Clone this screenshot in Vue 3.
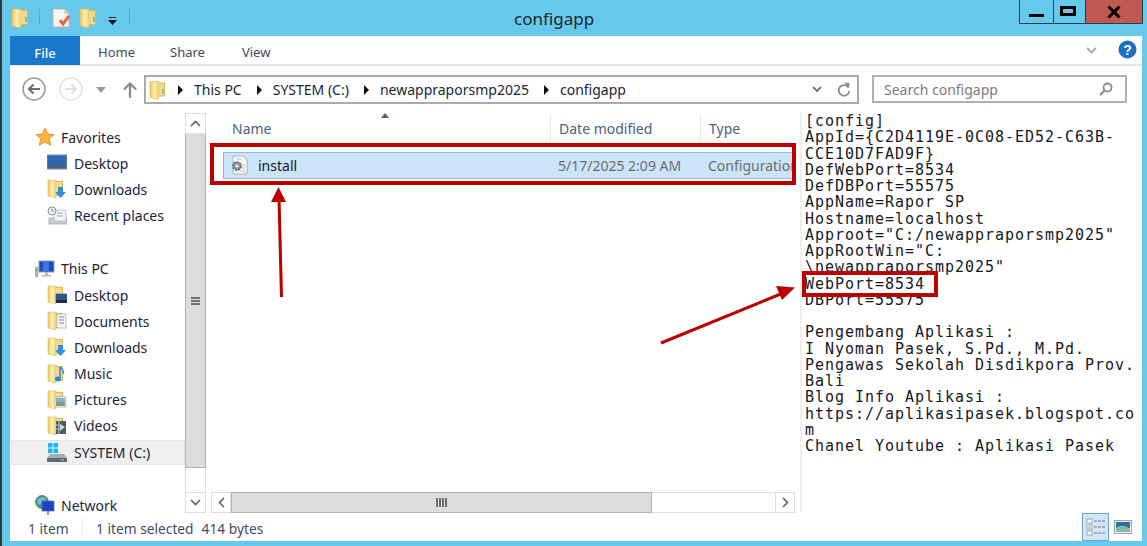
<script setup>
const favorites = [
  { label: 'Desktop', icon: 'desk' },
  { label: 'Downloads', icon: 'dl' },
  { label: 'Recent places', icon: 'recent' }
]
const pc = [
  { label: 'Desktop', icon: 'fdesk' },
  { label: 'Documents', icon: 'fdoc' },
  { label: 'Downloads', icon: 'dl' },
  { label: 'Music', icon: 'fmusic' },
  { label: 'Pictures', icon: 'fpic' },
  { label: 'Videos', icon: 'fvid' }
]
const crumbs = ['This PC', 'SYSTEM (C:)', 'newappraporsmp2025', 'configapp']
const lines = [
  '[config]',
  'AppId={C2D4119E-0C08-ED52-C63B-',
  'CCE10D7FAD9F}',
  'DefWebPort=8534',
  'DefDBPort=55575',
  'AppName=Rapor SP',
  'Hostname=localhost',
  'Approot="C:/newappraporsmp2025"',
  'AppRootWin="C:',
  '\\newappraporsmp2025"',
  'WebPort=8534',
  'DBPort=55575',
  ' ',
  'Pengembang Aplikasi :',
  'I Nyoman Pasek, S.Pd., M.Pd.',
  'Pengawas Sekolah Disdikpora Prov.',
  'Bali',
  'Blog Info Aplikasi :',
  'https://aplikasipasek.blogspot.co',
  'm',
  'Chanel Youtube : Aplikasi Pasek'
]
</script>

<template>
  <div class="screen">
    <svg class="defs" width="0" height="0" aria-hidden="true">
      <defs>
        <linearGradient id="fg" x1="0" y1="0" x2="1" y2="0">
          <stop offset="0" stop-color="#e9c660" />
          <stop offset="0.5" stop-color="#fbefb0" />
          <stop offset="1" stop-color="#f2d67e" />
        </linearGradient>
        <symbol id="folder" viewBox="0 0 18 20">
          <path d="M1 1h9l1 1h6v15H1z" fill="#dcb55c" />
          <path d="M1 1h9v19l-9-2z" fill="url(#fg)" stroke="#d9b552" stroke-width=".5" />
          <path d="M10 3h6v13h-6z" fill="#f3d98a" />
          <rect x="14.200" y="9" width="1.400" height="5" fill="#5fa8d6" />
        </symbol>
        <symbol id="gfolder" viewBox="0 0 18 20">
          <path d="M1 1h8l1 1h6v15H1z" fill="#dcb55c" />
          <path d="M1 1h8v18l-8-2z" fill="url(#fg)" stroke="#d9b552" stroke-width=".5" />
          <path d="M9 3h6v13H9z" fill="#f3d98a" />
        </symbol>
      </defs>
    </svg>

    <header class="titlebar">
      <div class="quick">
        <svg class="qi" width="18" height="20"><use href="#folder" /></svg>
        <span class="qsep"></span>
        <svg class="qdoc" width="19" height="20" viewBox="0 0 19 20">
          <path d="M1 1h12l4 4v14H1z" fill="#f8f6f5" stroke="#b9b5b3" />
          <path d="M13 1v4h4" fill="#dcd8d6" stroke="#b9b5b3" />
          <path d="M8 12l3 4 6-8" fill="none" stroke="#e2683c" stroke-width="3" />
        </svg>
        <svg class="qfolder" width="18" height="20"><use href="#folder" /></svg>
        <svg class="qdrop" width="9" height="8" viewBox="0 0 9 8">
          <path d="M1 0h7v1H1z" fill="#222" />
          <path d="M0 3h9L4.500 8z" fill="#111" />
        </svg>
        <span class="qsep last"></span>
      </div>
      <div class="wintitle">configapp</div>
      <div class="controls">
        <div class="ctl min"><span class="minbar"></span></div>
        <div class="ctl max"><span class="maxbox"></span></div>
        <div class="ctl close">
          <svg width="14" height="12" viewBox="0 0 14 12"><path d="M1.500 .5l11 11M12.500 .5l-11 11" stroke="#000" stroke-width="3" /></svg>
        </div>
      </div>
    </header>

    <div class="window">
      <nav class="ribbon">
        <div class="filetab">File</div>
        <div class="tab home">Home</div>
        <div class="tab share">Share</div>
        <div class="tab view">View</div>
        <svg class="rchev" width="11" height="7" viewBox="0 0 11 7"><path d="M1 1l4.500 4.500L10 1" fill="none" stroke="#a9a9a9" stroke-width="1.800" /></svg>
        <svg class="help" width="19" height="19" viewBox="0 0 19 19">
          <circle cx="9.500" cy="9.500" r="9" fill="#1a6fc9" />
          <text x="9.500" y="14.500" text-anchor="middle" font-size="14" font-weight="700" fill="#fff" font-family="Liberation Sans, sans-serif">?</text>
        </svg>
      </nav>

      <div class="navbar">
        <svg class="back" width="24" height="24" viewBox="0 0 24 24">
          <circle cx="12" cy="12" r="11" fill="#fff" stroke="#9c9c9c" stroke-width="1.500" />
          <path d="M18 12H7M11.500 7.500L7 12l4.500 4.500" fill="none" stroke="#6d6d6d" stroke-width="2" />
        </svg>
        <svg class="forward" width="24" height="24" viewBox="0 0 24 24">
          <circle cx="12" cy="12" r="11" fill="#fff" stroke="#e2e2e2" stroke-width="1.500" />
          <path d="M6 12h11M12.500 7.500L17 12l-4.500 4.500" fill="none" stroke="#e0e0e0" stroke-width="2" />
        </svg>
        <svg class="hist" width="10" height="6" viewBox="0 0 10 6"><path d="M0 0h10L5 6z" fill="#9a9a9a" /></svg>
        <svg class="up" width="14" height="16" viewBox="0 0 14 16"><path d="M7 16V2M1 7.500L7 1.500l6 6" fill="none" stroke="#8a8a8a" stroke-width="2.200" /></svg>
        <div class="address">
          <svg class="afolder" width="17" height="20"><use href="#folder" /></svg>
          <template v-for="c in crumbs" :key="c">
            <span class="caret"></span>
            <span class="crumb">{{ c }}</span>
          </template>
          <svg class="achev" width="10" height="7" viewBox="0 0 10 7"><path d="M1 1l4 4 4-4" fill="none" stroke="#707070" stroke-width="1.800" /></svg>
          <svg class="refresh" width="14" height="15" viewBox="0 0 14 15">
            <path d="M11.500 5.500A5.300 5.300 0 1 0 12.300 9" fill="none" stroke="#8c8c8c" stroke-width="1.800" />
            <path d="M7.500 0.500l5 .5-.5 5z" fill="#8c8c8c" />
          </svg>
        </div>
        <div class="search">
          <span>Search configapp</span>
          <svg width="14" height="14" viewBox="0 0 14 14">
            <circle cx="8.500" cy="5.500" r="4" fill="none" stroke="#8a8a8a" stroke-width="1.800" />
            <path d="M5.500 8.500L1 13" stroke="#8a8a8a" stroke-width="2.200" />
          </svg>
        </div>
      </div>

      <main class="main">
        <aside class="sidebar">
          <div class="group fav">
            <div class="root">
              <svg width="20" height="20" viewBox="0 0 20 20">
                <path d="M10 1l2.700 6 6.300.6-4.800 4.200 1.500 6.400L10 15l-5.700 3.200 1.500-6.400L1 7.600 7.300 7z" fill="#f9b73e" stroke="#ef8f2a" stroke-width="1" />
              </svg>
              <span>Favorites</span>
            </div>
            <div v-for="f in favorites" :key="f.label" class="item">
              <svg width="20" height="20" viewBox="0 0 20 20">
                <template v-if="f.icon === 'desk'">
                  <rect x="0" y="2" width="20" height="14" fill="#2f66b4" stroke="#7c8ca0" />
                  <rect x="1" y="12" width="18" height="3" fill="#48617e" />
                </template>
                <template v-else-if="f.icon === 'dl'">
                  <use href="#gfolder" width="18" height="20" />
                  <path d="M11 8h5v5h3l-5.500 6L8 13h3z" fill="#2f8fdc" />
                </template>
                <template v-else>
                  <rect x="2" y="12" width="18" height="6" fill="#c9cdd2" stroke="#9da3a9" stroke-width=".7" />
                  <rect x="7" y="4" width="12" height="11" fill="#f3f5f7" stroke="#a6acb2" stroke-width=".7" />
                  <circle cx="5" cy="5" r="4" fill="#eef0f2" stroke="#8b9198" />
                  <path d="M5 3v2h2" stroke="#69707a" fill="none" stroke-width=".8" />
                  <path d="M10 7h6M10 10h6" stroke="#7fb0d8" stroke-width="1.200" />
                </template>
              </svg>
              <span>{{ f.label }}</span>
            </div>
          </div>

          <div class="group pc">
            <div class="root">
              <svg width="20" height="20" viewBox="0 0 20 20">
                <rect x="0" y="8" width="3" height="10" rx="1" fill="#b9bdb9" stroke="#8a8f8a" stroke-width=".5" />
                <rect x="1" y="10" width="1" height="2" fill="#4cc14c" />
                <rect x="4" y="2" width="15" height="11" fill="#1f49c2" stroke="#99a3ad" />
                <path d="M8 3h6v9H8z" fill="#3d74e8" />
                <path d="M10 13h3v3h-3zM7 16h9v1.500H7z" fill="#b6bbc0" />
              </svg>
              <span>This PC</span>
            </div>
            <div v-for="f in pc" :key="f.label + 'pc'" class="item">
              <svg width="20" height="20" viewBox="0 0 20 20">
                <use href="#gfolder" width="18" height="20" />
                <template v-if="f.icon === 'fdesk'">
                  <rect x="9" y="9" width="11" height="8" fill="#2257a8" stroke="#555" stroke-width=".7" />
                  <rect x="9" y="15" width="11" height="3" fill="#2b2f33" />
                </template>
                <path v-else-if="f.icon === 'dl'" d="M11 8h5v5h3l-5.500 6L8 13h3z" fill="#2f8fdc" />
                <template v-else-if="f.icon === 'fdoc'">
                  <rect x="10" y="3" width="9" height="14" fill="#f3f5f7" stroke="#a0a6ac" stroke-width=".7" />
                  <path d="M12 6h5M12 9h5M12 12h5" stroke="#7c8896" />
                </template>
                <template v-else-if="f.icon === 'fmusic'">
                  <path d="M13 3v12" stroke="#2f86d4" stroke-width="1.500" />
                  <path d="M13 3c3 2 4 4 3 7" fill="none" stroke="#2f86d4" stroke-width="1.300" />
                  <ellipse cx="11" cy="15" rx="3" ry="2.400" fill="#2f86d4" />
                </template>
                <template v-else-if="f.icon === 'fpic'">
                  <rect x="8" y="7" width="11" height="10" fill="#f5f7f8" stroke="#a0a6ac" stroke-width=".7" />
                  <rect x="9" y="8" width="9" height="4" fill="#7fb7d8" />
                  <rect x="9" y="12" width="9" height="4" fill="#8a9f6c" />
                </template>
                <template v-else>
                  <rect x="9" y="5" width="10" height="13" fill="#4e5a64" />
                  <path d="M12 5v13M9 9h3M9 13h3" stroke="#c6ccd0" />
                  <path d="M13 8l5 3-5 4z" fill="#cfd8dc" />
                </template>
              </svg>
              <span>{{ f.label }}</span>
            </div>
            <div class="item selected">
              <svg width="20" height="20" viewBox="0 0 20 20">
                <path d="M1 0h4.500v4.500H1zM6.500 0H11v4.500H6.500zM1 5.500h4.500V10H1zM6.500 5.500H11V10H6.500z" fill="#19b9f0" />
                <path d="M3 11h14l3 4v4H0v-4z" fill="#a4adb4" />
                <rect x="0" y="15" width="20" height="4" fill="#5d6a74" />
                <rect x="14" y="16" width="3" height="1.500" fill="#5fd55f" />
              </svg>
              <span>SYSTEM (C:)</span>
            </div>
          </div>

          <div class="root net">
            <svg width="20" height="21" viewBox="0 0 20 21">
              <circle cx="7" cy="7" r="6.500" fill="#3fa14a" stroke="#2f6fb0" stroke-width=".7" />
              <path d="M3 4c2-2 5-3 7-1l1 3-4 1-2 3-3-2z" fill="#79b4ea" />
              <rect x="7" y="6" width="12" height="10" fill="#1c43c7" stroke="#5a6c90" stroke-width=".7" />
              <path d="M13 16v4" stroke="#66707a" stroke-width="1.500" />
            </svg>
            <span>Network</span>
          </div>
        </aside>

        <div class="vscroll">
          <div class="sbtn"><svg width="11" height="7" viewBox="0 0 11 7"><path d="M1 6l4.500-4.500L10 6" fill="none" stroke="#606060" stroke-width="1.600" /></svg></div>
          <div class="vthumb"><span></span><span></span><span></span></div>
          <div class="vtrack"></div>
          <div class="sbtn"><svg width="11" height="7" viewBox="0 0 11 7"><path d="M1 1l4.500 4.500L10 1" fill="none" stroke="#606060" stroke-width="1.600" /></svg></div>
        </div>

        <section class="list">
          <div class="colhead">
            <div class="col c-name">Name<i class="sort"></i></div>
            <div class="col c-date">Date modified</div>
            <div class="col c-type">Type</div>
          </div>
          <div class="filerow">
            <svg class="fileicon" width="18" height="20" viewBox="0 0 18 20">
              <path d="M3 1h10l4 4v14H3z" fill="#f7f7f7" stroke="#a5a5a5" stroke-width=".8" />
              <path d="M6 4h6M6 16h9M10 13h5M11 10h4" stroke="#c0c0c0" />
              <circle cx="7" cy="11" r="4" fill="#8f98a2" stroke="#5f6770" stroke-dasharray="2 1" stroke-width="1.600" />
              <circle cx="7" cy="11" r="1.500" fill="#eef2f6" />
            </svg>
            <span class="fname">install</span>
            <span class="fdate">5/17/2025 2:09 AM</span>
            <span class="ftype">Configuration settings</span>
          </div>
          <div class="spacer"></div>
          <div class="hscroll">
            <div class="hbtn"><svg width="7" height="11" viewBox="0 0 7 11"><path d="M6 1L1.500 5.500 6 10" fill="none" stroke="#606060" stroke-width="1.600" /></svg></div>
            <div class="hthumb"><span></span><span></span><span></span><span></span></div>
            <div class="htrack"></div>
            <div class="hbtn"><svg width="7" height="11" viewBox="0 0 7 11"><path d="M1 1l4.500 4.500L1 10" fill="none" stroke="#606060" stroke-width="1.600" /></svg></div>
          </div>
        </section>

        <section class="preview">
          <div v-for="(l, i) in lines" :key="i" class="pline">{{ l }}</div>
        </section>
      </main>

      <footer class="status">
        <span class="s-count">1 item</span>
        <span class="s-sep"></span>
        <span>1 item selected</span>
        <span class="s-size">414 bytes</span>
        <div class="toggles">
          <div class="toggle on">
            <svg width="20" height="20" viewBox="0 0 20 20">
              <rect x="1" y="2" width="5" height="4" fill="#fff" stroke="#8a97a5" stroke-width=".8" />
              <rect x="1" y="8" width="5" height="4" fill="#fff" stroke="#8a97a5" stroke-width=".8" />
              <rect x="1" y="14" width="5" height="4" fill="#fff" stroke="#8a97a5" stroke-width=".8" />
              <path d="M2.500 10h2" stroke="#d9534f" />
              <path d="M8 4h11M8 10h11M8 16h11" stroke="#6a7886" stroke-dasharray="3 1" />
            </svg>
          </div>
          <svg class="thumb" width="18" height="14" viewBox="0 0 18 14">
            <rect x=".5" y=".5" width="17" height="13" fill="#eef3f6" stroke="#9aa7b2" />
            <rect x="2" y="2" width="14" height="6" fill="#2f6f9e" />
            <path d="M2 8c4-3 9-3 14 1v3H2z" fill="#8cb9a6" />
          </svg>
        </div>
      </footer>
    </div>

    <svg class="annot" width="1147" height="546" viewBox="0 0 1147 546" aria-hidden="true">
      <rect x="212" y="145" width="582" height="38" fill="none" stroke="#bb0000" stroke-width="4" />
      <rect x="804" y="273" width="132" height="22" fill="none" stroke="#bb0000" stroke-width="4" />
      <path d="M281.500 297L279 198" stroke="#bb0000" stroke-width="3" fill="none" />
      <path d="M278.500 187L286 202H271z" fill="#bb0000" />
      <path d="M661 343L783 293" stroke="#bb0000" stroke-width="3" fill="none" />
      <path d="M795 287.500L782 300 776 286z" fill="#bb0000" />
    </svg>
  </div>
</template>

<style>
html, body { margin: 0; padding: 0; background: #66c9ec; }
</style>

<style scoped>
.screen {
  position: relative;
  width: 1147px;
  height: 546px;
  overflow: hidden;
  background: #66c9ec;
  border-left: 2px solid #33383b;
  box-sizing: border-box;
  font-family: "Noto Sans", "Open Sans", sans-serif;
  font-size: 14px;
  color: #1c2536;
}
.defs { position: absolute; }

.titlebar { display: flex; height: 36px; }
.quick { display: flex; align-items: flex-start; width: 512px; padding-top: 8px; box-sizing: border-box; }
.qi { margin-left: 9px; }
.qsep { width: 1px; height: 15px; margin: 1px 0 0 10px; background: #7d9aa6; }
.qsep.last { margin-left: 12px; }
.qdoc { margin-left: 12px; }
.qfolder { margin-left: 8px; }
.qdrop { margin: 9px 0 0 11px; }
.wintitle { font-size: 17px; line-height: 38px; color: #17252c; }
.controls {
  display: flex;
  height: 24px;
  margin-left: auto;
  margin-right: 4px;
  border: 1px solid #28404d;
  border-top: 0;
  box-sizing: border-box;
}
.ctl { display: flex; align-items: center; justify-content: center; box-sizing: border-box; }
.min { width: 34px; border-right: 1px solid #28404d; }
.max { width: 31px; }
.close { width: 57px; background: #c0584f; border-left: 1px solid #28404d; }
.minbar { width: 15px; height: 3px; background: #000; margin-top: 8px; }
.maxbox { width: 10px; height: 4px; border: 3px solid #000; margin: 0 3px 2px 0; }

.window {
  display: flex;
  flex-direction: column;
  height: 505px;
  margin: 0 5px 0 8px;
  background: #fff;
}
.ribbon {
  display: flex;
  align-items: flex-start;
  height: 30px;
  flex: none;
  box-sizing: border-box;
  border-bottom: 2px solid #e6e6e6;
  font-size: 13px;
  color: #3d4a5c;
}
.filetab {
  display: flex;
  align-items: center;
  justify-content: center;
  width: 70px;
  height: 29px;
  flex: none;
  padding-top: 4px;
  box-sizing: border-box;
  background: #1878cc;
  color: #fff;
  font-weight: 500;
}
.tab { padding-top: 7px; }
.home { margin-left: 18px; }
.share { margin-left: 35px; }
.view { margin-left: 37px; }
.rchev { margin: 11px 21px 0 auto; }
.help { margin: 4px 5px 0 0; }

.navbar { display: flex; align-items: flex-start; height: 47px; flex: none; padding-top: 9px; box-sizing: border-box; }
.back { margin: 2px 0 0 12px; }
.forward { margin: 2px 0 0 13px; }
.hist { margin: 12px 0 0 13px; }
.up { margin: 7px 0 0 17px; }
.address {
  display: flex;
  align-items: center;
  width: 715px;
  height: 29px;
  margin-left: 7px;
  padding-left: 3px;
  box-sizing: border-box;
  border: 2px solid #ababab;
  color: #1c2536;
}
.afolder { flex: none; margin-right: -3px; }
.caret {
  flex: none;
  width: 0;
  height: 0;
  margin: 0 11px 0 15px;
  border-left: 5px solid #111;
  border-top: 5px solid transparent;
  border-bottom: 5px solid transparent;
}
.crumb { white-space: nowrap; }
.achev { margin-left: auto; margin-right: 15px; }
.refresh { margin-right: 6px; }
.search {
  display: flex;
  align-items: center;
  justify-content: space-between;
  width: 255px;
  height: 28px;
  margin-left: 13px;
  padding: 0 12px 0 10px;
  box-sizing: border-box;
  border: 2px solid #b0b0b0;
  color: #7b7b7b;
}

.main { display: flex; height: 400px; flex: none; }
.sidebar { width: 175px; flex: none; padding-top: 11px; box-sizing: border-box; }
.group { display: flex; flex-direction: column; }
.pc { margin-top: 27px; }
.root, .item { display: flex; align-items: center; height: 26.2px; white-space: nowrap; }
.root { padding-left: 25px; gap: 6px; }
.item { padding-left: 37px; gap: 7px; }
.root svg, .item svg { flex: none; }
.item.selected {
  height: 25px;
  margin: 1px 0 0 1px;
  box-sizing: border-box;
  background: #f0f0f0;
  border: 1px solid #e5e5e5;
  padding-left: 35px;
}
.net { margin-top: 27px; }

.vscroll { display: flex; flex-direction: column; width: 21px; flex: none; }
.sbtn {
  display: flex;
  align-items: center;
  justify-content: center;
  height: 21px;
  flex: none;
  border: 1px solid #dedede;
  box-sizing: border-box;
  background: #fff;
}
.vthumb {
  display: flex;
  flex-direction: column;
  justify-content: center;
  gap: 1px;
  height: 334px;
  flex: none;
  align-items: center;
  background: #dcdcdc;
  border: 1px solid #b4b4b4;
  border-width: 0 1px 1px 1px;
  box-sizing: border-box;
}
.vthumb span { width: 9px; height: 2px; background: #6f6f6f; }
.vtrack { flex: 1; border: solid #dedede; border-width: 0 1px; }

.list { display: flex; flex-direction: column; width: 594px; flex: none; overflow: hidden; }
.colhead { display: flex; height: 29px; flex: none; margin-top: 1px; color: #4d607a; }
.col { display: flex; align-items: center; box-sizing: border-box; padding-left: 8px; }
.c-name { position: relative; width: 345px; padding-left: 26px; border-right: 1px solid #e7e7e7; }
.c-date { width: 150px; border-right: 1px solid #e7e7e7; }
.c-type { flex: 1; }
.sort {
  position: absolute;
  top: -1px;
  left: 175px;
  border-left: 4px solid transparent;
  border-right: 4px solid transparent;
  border-bottom: 5px solid #4a6180;
}
.filerow {
  display: flex;
  align-items: center;
  height: 27px;
  flex: none;
  margin: 9px 5px 0 17px;
  padding-bottom: 1px;
  box-sizing: border-box;
  background: #cce4f9;
  border: 1px solid #8fb8e2;
  overflow: hidden;
  white-space: nowrap;
  color: #6d6d6d;
}
.fileicon { flex: none; margin-left: 6px; }
.fname { width: 300px; flex: none; margin-left: 10px; color: #111a2b; }
.fdate { width: 150px; flex: none; }
.spacer { flex: 1; }
.hscroll { display: flex; height: 21px; flex: none; margin: 0 5px 0 5px; }
.hbtn {
  display: flex;
  align-items: center;
  justify-content: center;
  width: 20px;
  flex: none;
  border: 1px solid #dedede;
  box-sizing: border-box;
}
.hthumb {
  display: flex;
  align-items: center;
  justify-content: center;
  gap: 1px;
  width: 421px;
  flex: none;
  background: #dcdcdc;
  border: 1px solid #b4b4b4;
  box-sizing: border-box;
}
.hthumb span { width: 2px; height: 9px; background: #6f6f6f; }
.htrack { flex: 1; border: solid #dedede; border-width: 1px 0; }

.preview {
  flex: 1;
  box-sizing: border-box;
  padding-left: 3px;
  border-left: 2px solid #efefef;
  font-family: "DejaVu Sans Mono", "Liberation Mono", monospace;
  font-size: 15px;
  letter-spacing: .97px;
  line-height: 16.25px;
  color: #14181f;
  overflow: hidden;
}
.pline { white-space: pre; height: 16.25px; }

.status { display: flex; align-items: center; flex: 1; position: relative; font-size: 13.75px; color: #3f4d63; padding-left: 18px; }
.status > span { padding-top: 2px; }
.s-sep { width: 1px; height: 18px; background: #ececec; margin: 0 13px; }
.s-count { width: 41px; }
.s-size { margin-left: 8px; }
.toggles { display: flex; align-items: center; margin-left: auto; margin-right: 10px; height: 100%; }
.toggle {
  display: flex;
  align-items: center;
  justify-content: center;
  width: 27px;
  height: 100%;
  box-sizing: border-box;
  background: #cfe6f8;
  border: 1px solid #6fa3cf;
}
.thumb { margin-left: 5px; }

.annot { position: absolute; left: -2px; top: 0; pointer-events: none; }
</style>
